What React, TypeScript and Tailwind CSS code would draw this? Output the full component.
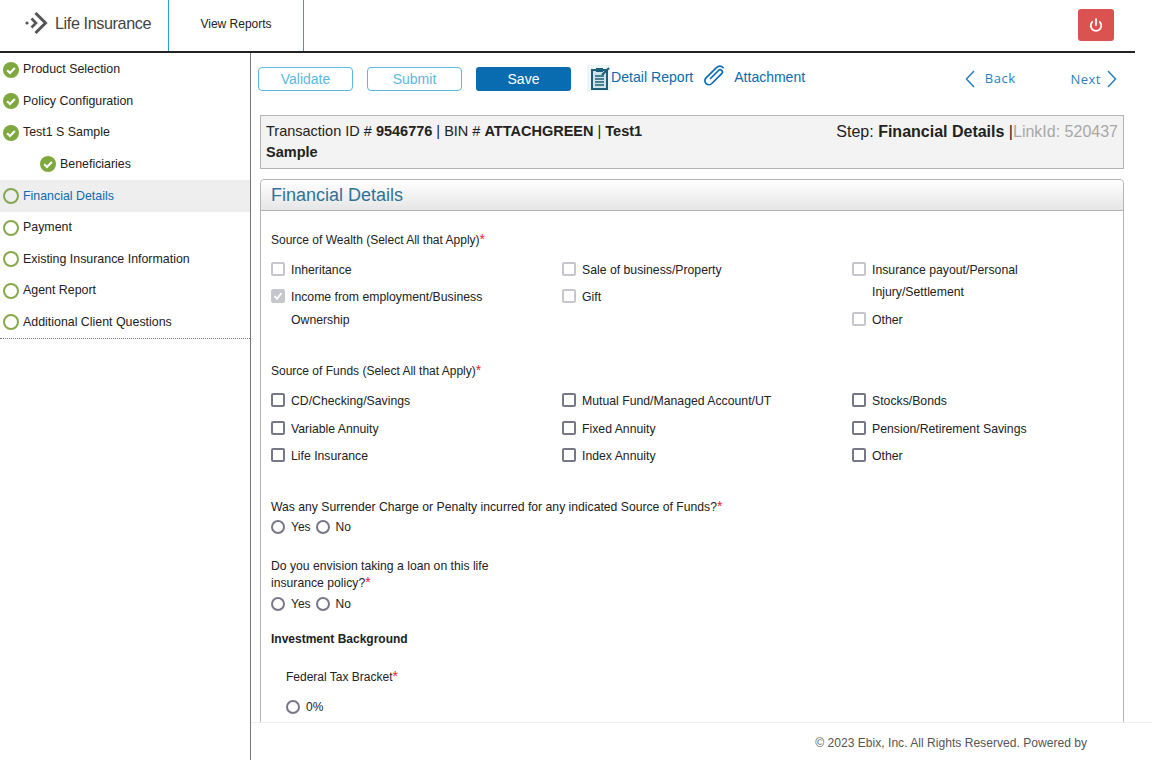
import { Power } from 'lucide-react';

const steps = [
  { label: 'Product Selection', done: true },
  { label: 'Policy Configuration', done: true },
  { label: 'Test1 S Sample', done: true },
  { label: 'Beneficiaries', done: true, child: true },
  { label: 'Financial Details', active: true },
  { label: 'Payment' },
  { label: 'Existing Insurance Information' },
  { label: 'Agent Report' },
  { label: 'Additional Client Questions' },
];

const fundRows = [
  ['CD/Checking/Savings', 'Mutual Fund/Managed Account/UT', 'Stocks/Bonds'],
  ['Variable Annuity', 'Fixed Annuity', 'Pension/Retirement Savings'],
  ['Life Insurance', 'Index Annuity', 'Other'],
];

function Logo() {
  return (
    <svg width="23" height="24" viewBox="0 0 23 24" className="text-[#555]">
      <circle cx="2" cy="12" r="1.6" fill="currentColor" />
      <path d="M6.5 7.5 11 12l-4.5 4.5" fill="none" stroke="currentColor" strokeWidth="2.6" />
      <path d="M10.5 2 20.5 12l-10 10" fill="none" stroke="currentColor" strokeWidth="3" />
    </svg>
  );
}

function StepIcon({ done }: { done?: boolean }) {
  if (done) {
    return (
      <svg width="16" height="16" viewBox="0 0 16 16" className="shrink-0">
        <circle cx="8" cy="8" r="8" fill="#7fa83f" />
        <path d="M4.2 8.2 7 11l4.8-5" fill="none" stroke="#fff" strokeWidth="2.2" />
      </svg>
    );
  }
  return <span className="w-4 h-4 shrink-0 rounded-full border-[2.5px] border-[#86a94a]" />;
}

function Required() {
  return <span className="text-[#e8202a] text-[14px] leading-[12px]">*</span>;
}

function Check({ label, tone = 'dark', checked }: { label: string; tone?: 'dark' | 'light'; checked?: boolean }) {
  const box = tone === 'dark' ? 'border-[#77778a]' : 'border-[#c6c6ce]';
  return (
    <div className="flex items-start gap-[6px]">
      <span
        className={`mt-[3px] w-[14px] h-[14px] shrink-0 rounded-[2px] border-2 flex items-center justify-center ${box} ${checked ? 'bg-[#c6c6ce]' : 'bg-white'}`}
      >
        {checked && (
          <svg width="10" height="10" viewBox="0 0 10 10">
            <path d="M1.5 5 4 7.8 8.5 2" fill="none" stroke="#fff" strokeWidth="1.8" />
          </svg>
        )}
      </span>
      <span className="max-w-[205px] text-[12.25px]">{label}</span>
    </div>
  );
}

function Radio({ label }: { label: string }) {
  return (
    <span className="flex items-center gap-[6px]">
      <span className="w-[14px] h-[14px] rounded-full border-2 border-[#77778a] bg-white" />
      {label}
    </span>
  );
}

export default function App() {
  return (
    <div className="h-[760px] w-[1152px] overflow-hidden bg-white text-[#222] font-['Liberation_Sans',Arial,sans-serif] text-[12px]">
      {/* Header */}
      <div className="w-[1135px] h-[53px] flex items-stretch border-b-2 border-[#222]">
        <div className="w-[169px] flex items-center pl-[25px] gap-[7px] border-r border-[#2a9fdc] pb-[5px]">
          <Logo />
          <span className="text-[16.2px] tracking-[-0.4px] text-[#444]">Life Insurance</span>
        </div>
        <div className="w-[135px] flex items-center justify-center border-r border-[#2a9fdc] pb-[3px] text-[#222]">
          View Reports
        </div>
        <div className="flex-1 flex justify-end items-start pt-[9px] pr-[21px]">
          <button className="w-[36px] h-[32px] rounded-[3px] bg-[#db5350] flex items-center justify-center">
            <Power className="w-[14px] h-[14px] text-white" strokeWidth={3} />
          </button>
        </div>
      </div>

      <div className="flex h-[707px]">
        {/* Sidebar */}
        <div className="w-[251px] shrink-0 border-r border-[#777]">
          <div className="pt-[0.8px] border-b border-dotted border-[#777] text-[12.4px]">
            {steps.map((s) => (
              <div
                key={s.label}
                className={`h-[31.6px] flex items-center gap-[4px] ${s.child ? 'pl-[40px]' : 'pl-[3px]'} ${s.active ? 'bg-[#eeeeee] text-[#0a6cb0]' : ''}`}
              >
                <StepIcon done={s.done} />
                <span>{s.label}</span>
              </div>
            ))}
          </div>
        </div>

        {/* Main */}
        <div className="flex-1 min-w-0 flex flex-col">
          <div className="h-[670px] overflow-hidden border-b border-[#eee]">
            {/* Toolbar */}
            <div className="h-[62px] w-[884px] flex items-start pl-[7px] pr-[18px] pt-[14px]">
              <button className="w-[95px] h-[24px] rounded-[4px] border border-[#5bb8e0] text-[#5bb8e0] text-[14px]">Validate</button>
              <button className="ml-[14px] w-[95px] h-[24px] rounded-[4px] border border-[#5bb8e0] text-[#5bb8e0] text-[14px]">Submit</button>
              <button className="ml-[14px] w-[95px] h-[24px] rounded-[3px] bg-[#0a6cb0] text-white text-[14px]">Save</button>
              <svg width="24" height="26" viewBox="0 0 24 26" className="ml-[16px] -mt-[2px] bg-[#eef5f7]">
                <rect x="5" y="5" width="15" height="19" fill="#cfe3ea" stroke="#1f5f7a" strokeWidth="2" />
                <rect x="9" y="3" width="7" height="4" fill="#1f5f7a" />
                <path d="M8 11h9M8 14h9M8 17h9M8 20h9" stroke="#1f5f7a" strokeWidth="1.3" />
                <path d="M15 10l7-7" stroke="#1f5f7a" strokeWidth="2.2" />
              </svg>
              <span className="text-[14.1px] leading-[21px] text-[#0a6cb0]">Detail Report</span>
              <svg width="22" height="22" viewBox="0 0 22 22" className="ml-[10px] -mt-[2px] text-[#0a6cb0]">
                <path
                  d="M7.5 13.5 15.5 5.5a2.2 2.2 0 0 1 3.2 3.1L8.8 18.5a4 4 0 0 1-5.8-5.6L13.5 2.6a5 5 0 0 1 6.6 0"
                  fill="none"
                  stroke="currentColor"
                  strokeWidth="1.7"
                  strokeLinecap="round"
                />
              </svg>
              <span className="ml-[9px] text-[14px] leading-[21px] text-[#0a6cb0]">Attachment</span>
              <span className="ml-auto flex items-center gap-[10px] text-[13px] leading-[23px] tracking-[0.5px] text-[#2a7fc0] font-['Open_Sans',sans-serif]">
                <svg width="10" height="18" viewBox="0 0 10 18">
                  <path d="M9 1 1.5 9 9 17" fill="none" stroke="currentColor" strokeWidth="1.5" />
                </svg>
                Back
              </span>
              <span className="ml-[55px] flex items-center gap-[6px] text-[13px] leading-[24px] tracking-[0.5px] text-[#2a7fc0] font-['Open_Sans',sans-serif]">
                Next
                <svg width="10" height="18" viewBox="0 0 10 18">
                  <path d="M1 1 8.5 9 1 17" fill="none" stroke="currentColor" strokeWidth="1.5" />
                </svg>
              </span>
            </div>

            <div className="w-[864px] ml-[9px]">
              {/* Transaction info */}
              <div className="h-[54px] border border-[#b4b4b4] bg-[#f3f3f3] flex justify-between pl-[5px] pr-[5px] pt-[5px]">
                <div className="w-[400px] text-[14.5px] leading-[21px]">
                  Transaction ID # <b>9546776</b> | BIN # <b>ATTACHGREEN</b> | <b>Test1 Sample</b>
                </div>
                <div className="text-[16px] leading-[20px] pt-[1px]">
                  Step: <b>Financial Details</b> |<span className="text-[#a8a8a8]">LinkId: 520437</span>
                </div>
              </div>

              {/* Panel */}
              <div className="mt-[10px] border border-[#b4b4b4] rounded-t-[4px] h-[600px]">
                <div className="h-[31px] border-b border-[#b4b4b4] rounded-t-[4px] bg-gradient-to-b from-white to-[#e6e6e6] pl-[10px] text-[18px] leading-[31px] text-[#2f7396]">
                  Financial Details
                </div>
                <div className="pl-[10px] pt-[21px]">
                  <div className="leading-[17px]">
                    Source of Wealth (Select All that Apply)<Required />
                  </div>
                  <div className="mt-[10px] grid grid-cols-[291px_290px_200px] leading-[22px]">
                    <div className="flex flex-col gap-[5px]">
                      <Check tone="light" label="Inheritance" />
                      <div className="leading-[23px]">
                        <Check tone="light" checked label="Income from employment/Business Ownership" />
                      </div>
                    </div>
                    <div className="flex flex-col gap-[5px]">
                      <Check tone="light" label="Sale of business/Property" />
                      <Check tone="light" label="Gift" />
                    </div>
                    <div className="flex flex-col gap-[6px]">
                      <Check tone="light" label="Insurance payout/Personal Injury/Settlement" />
                      <Check tone="light" label="Other" />
                    </div>
                  </div>

                  <div className="mt-[31px] leading-[17px]">
                    Source of Funds (Select All that Apply)<Required />
                  </div>
                  <div className="mt-[10px] flex flex-col gap-[5.5px] leading-[22px]">
                    {fundRows.map((row) => (
                      <div key={row[0]} className="grid grid-cols-[291px_290px_200px]">
                        {row.map((label) => (
                          <Check key={label} label={label} />
                        ))}
                      </div>
                    ))}
                  </div>

                  <div className="mt-[32px] text-[12.2px] leading-[17px]">
                    Was any Surrender Charge or Penalty incurred for any indicated Source of Funds?<Required />
                  </div>
                  <div className="mt-[2px] flex gap-[5px] leading-[18px]">
                    <Radio label="Yes" />
                    <Radio label="No" />
                  </div>

                  <div className="mt-[22px] w-[240px] text-[12.2px] leading-[17px]">
                    Do you envision taking a loan on this life insurance policy?<Required />
                  </div>
                  <div className="mt-[3px] flex gap-[5px] leading-[18px]">
                    <Radio label="Yes" />
                    <Radio label="No" />
                  </div>

                  <div className="mt-[18px] font-bold leading-[17px]">Investment Background</div>
                  <div className="mt-[21px] ml-[15px] leading-[17px]">
                    Federal Tax Bracket<Required />
                  </div>
                  <div className="mt-[12px] ml-[15px] flex leading-[18px]">
                    <Radio label="0%" />
                  </div>
                </div>
              </div>
            </div>
          </div>

          {/* Footer */}
          <div className="w-[884px] flex justify-end pr-[48px] pt-[11px] text-[#555] text-[12.1px]">
            © 2023 Ebix, Inc. All Rights Reserved. Powered by
          </div>
        </div>
      </div>
    </div>
  );
}
